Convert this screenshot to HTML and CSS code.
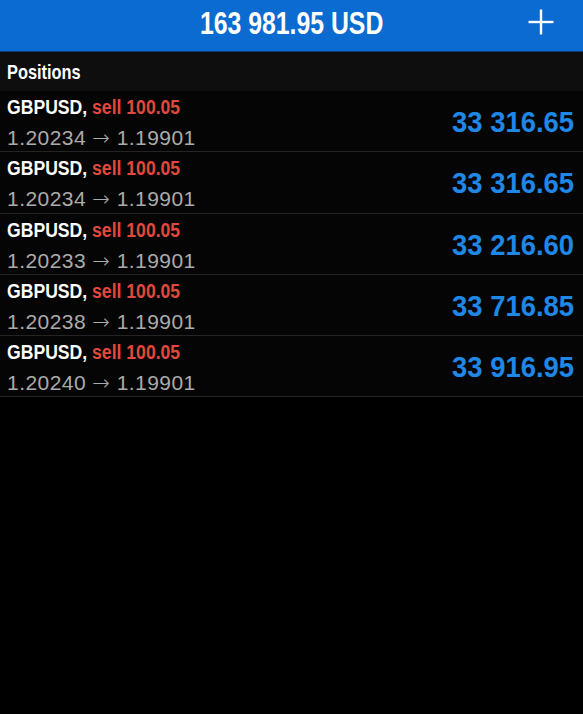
FILE: index.html
```html
<!DOCTYPE html>
<html>
<head>
<meta charset="utf-8">
<link rel="stylesheet" href="styles.css">
</head>
<body>
<header class="topbar">
  <div class="topbar-side"></div>
  <h1 class="balance"><span class="squeeze-title">163 981.95 USD</span></h1>
  <div class="topbar-side topbar-actions">
    <svg class="plus" width="26" height="26" viewBox="0 0 26 26" aria-label="Add">
      <line x1="13" y1="0.5" x2="13" y2="25.5"/>
      <line x1="0.5" y1="13" x2="25.5" y2="13"/>
    </svg>
  </div>
</header>
<section class="section-head"><span class="squeeze-head">Positions</span></section>
<ul class="positions">
  <li class="pos">
    <div class="pos-info">
      <div class="pos-title"><span class="squeeze-line"><span class="sym">GBPUSD,</span> <span class="side">sell 100.05</span></span></div>
      <div class="pos-prices">1.20234 <span class="arrow">→</span> 1.19901</div>
    </div>
    <div class="pos-profit"><span class="squeeze-value">33 316.65</span></div>
  </li>
  <li class="pos">
    <div class="pos-info">
      <div class="pos-title"><span class="squeeze-line"><span class="sym">GBPUSD,</span> <span class="side">sell 100.05</span></span></div>
      <div class="pos-prices">1.20234 <span class="arrow">→</span> 1.19901</div>
    </div>
    <div class="pos-profit"><span class="squeeze-value">33 316.65</span></div>
  </li>
  <li class="pos">
    <div class="pos-info">
      <div class="pos-title"><span class="squeeze-line"><span class="sym">GBPUSD,</span> <span class="side">sell 100.05</span></span></div>
      <div class="pos-prices">1.20233 <span class="arrow">→</span> 1.19901</div>
    </div>
    <div class="pos-profit"><span class="squeeze-value">33 216.60</span></div>
  </li>
  <li class="pos">
    <div class="pos-info">
      <div class="pos-title"><span class="squeeze-line"><span class="sym">GBPUSD,</span> <span class="side">sell 100.05</span></span></div>
      <div class="pos-prices">1.20238 <span class="arrow">→</span> 1.19901</div>
    </div>
    <div class="pos-profit"><span class="squeeze-value">33 716.85</span></div>
  </li>
  <li class="pos">
    <div class="pos-info">
      <div class="pos-title"><span class="squeeze-line"><span class="sym">GBPUSD,</span> <span class="side">sell 100.05</span></span></div>
      <div class="pos-prices">1.20240 <span class="arrow">→</span> 1.19901</div>
    </div>
    <div class="pos-profit"><span class="squeeze-value">33 916.95</span></div>
  </li>
</ul>
</body>
</html>
```
FILE: styles.css
```css
* { box-sizing: border-box; }
html, body { margin: 0; padding: 0; }
body {
  background: #000;
  color: #fff;
  font-family: "Liberation Sans", Arial, sans-serif;
  width: 583px;
  height: 714px;
  overflow: hidden;
}

.topbar {
  display: grid;
  grid-template-columns: 1fr auto 1fr;
  align-items: start;
  height: 52px;
  background: #0b6bd1;
  border-bottom: 1px solid #0a3f78;
}
.balance {
  margin: 0;
  font-size: 31px;
  font-weight: bold;
  line-height: 47px;
  white-space: nowrap;
}
.squeeze-title {
  display: inline-block;
  transform: scaleX(0.80);
  transform-origin: center;
}
.topbar-actions {
  display: flex;
  justify-content: flex-end;
  padding-top: 9px;
  padding-right: 29px;
}
.plus line {
  stroke: #fff;
  stroke-width: 2.4;
}

.section-head {
  height: 39px;
  padding: 2px 0 0 7px;
  background: #0e0e0e;
  font-size: 21px;
  font-weight: bold;
  line-height: 36px;
}
.squeeze-head {
  display: inline-block;
  transform: scaleX(0.78);
  transform-origin: left center;
}

.positions {
  list-style: none;
  margin: 0;
  padding: 0;
}
.pos {
  display: flex;
  justify-content: space-between;
  align-items: flex-start;
  height: 61.25px;
  padding: 4px 9px 0 7px;
  background: #050505;
  border-bottom: 1px solid #242424;
}
.pos-info {
  display: flex;
  flex-direction: column;
}
.pos-title {
  font-size: 20px;
  font-weight: bold;
  line-height: 24px;
  white-space: nowrap;
}
.squeeze-line {
  display: inline-block;
  transform: scaleX(0.88);
  transform-origin: left center;
}
.sym { color: #fff; }
.side { color: #e2483c; }
.pos-prices {
  margin-top: 6px;
  font-size: 21px;
  line-height: 26px;
  letter-spacing: 0.45px;
  color: #ababab;
  white-space: nowrap;
}
.arrow {
  font-family: "DejaVu Sans", sans-serif;
  font-weight: 200;
  font-size: 21px;
}
.pos-profit {
  margin-top: 11px;
  font-size: 29px;
  font-weight: bold;
  line-height: 32px;
  color: #1f87e6;
  white-space: nowrap;
}
.squeeze-value {
  display: inline-block;
  transform: scaleX(0.945);
  transform-origin: right center;
}
```
